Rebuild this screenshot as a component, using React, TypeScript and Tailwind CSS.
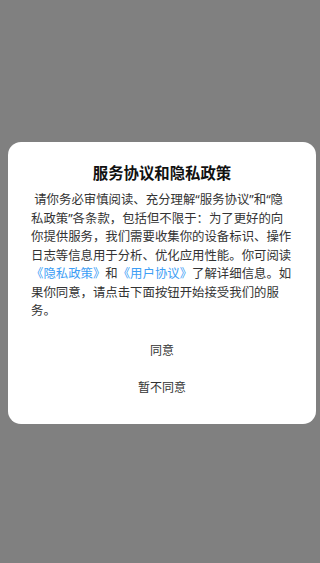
import React from "react";

export default function App() {
  return (
    <div
      className="w-[320px] h-[563px] bg-[#808080] flex flex-col pt-[142px]"
      style={{ fontFamily: '"Noto Sans CJK SC", "Noto Sans", sans-serif' }}
    >
      <div className="ml-[8px] w-[308px] bg-white rounded-[13px] flex flex-col pt-[19px] pb-[18px]">
        <h1 className="text-center text-[15.4px] leading-[22px] font-bold text-[#111]">
          服务协议和隐私政策
        </h1>
        <p
          className="mt-[8px] px-[23px] text-[12.4px] leading-[18.5px] text-[#333]"
          style={{ fontFamily: '"Noto Sans", "Noto Sans CJK SC", sans-serif' }}
        >
          {"\u00a0请你务必审慎阅读、充分理解“服务协议”和“隐私政策”各条款，包括但不限于：为了更好的向你提供服务，我们需要收集你的设备标识、操作日志等信息用于分析、优化应用性能。你可阅读"}
          <span className="text-[#3d9ef5]">《隐私政策》</span>和<span className="text-[#3d9ef5]">《用户协议》</span>了解详细信息。如果你同意，请点击下面按钮开始接受我们的服务。
        </p>
        <div className="mt-[11px] flex flex-col">
          <button className="h-[37px] flex items-center justify-center text-[12px] text-[#333]">
            同意
          </button>
          <button className="h-[37px] flex items-center justify-center text-[12px] text-[#333]">
            暂不同意
          </button>
        </div>
      </div>
    </div>
  );
}
